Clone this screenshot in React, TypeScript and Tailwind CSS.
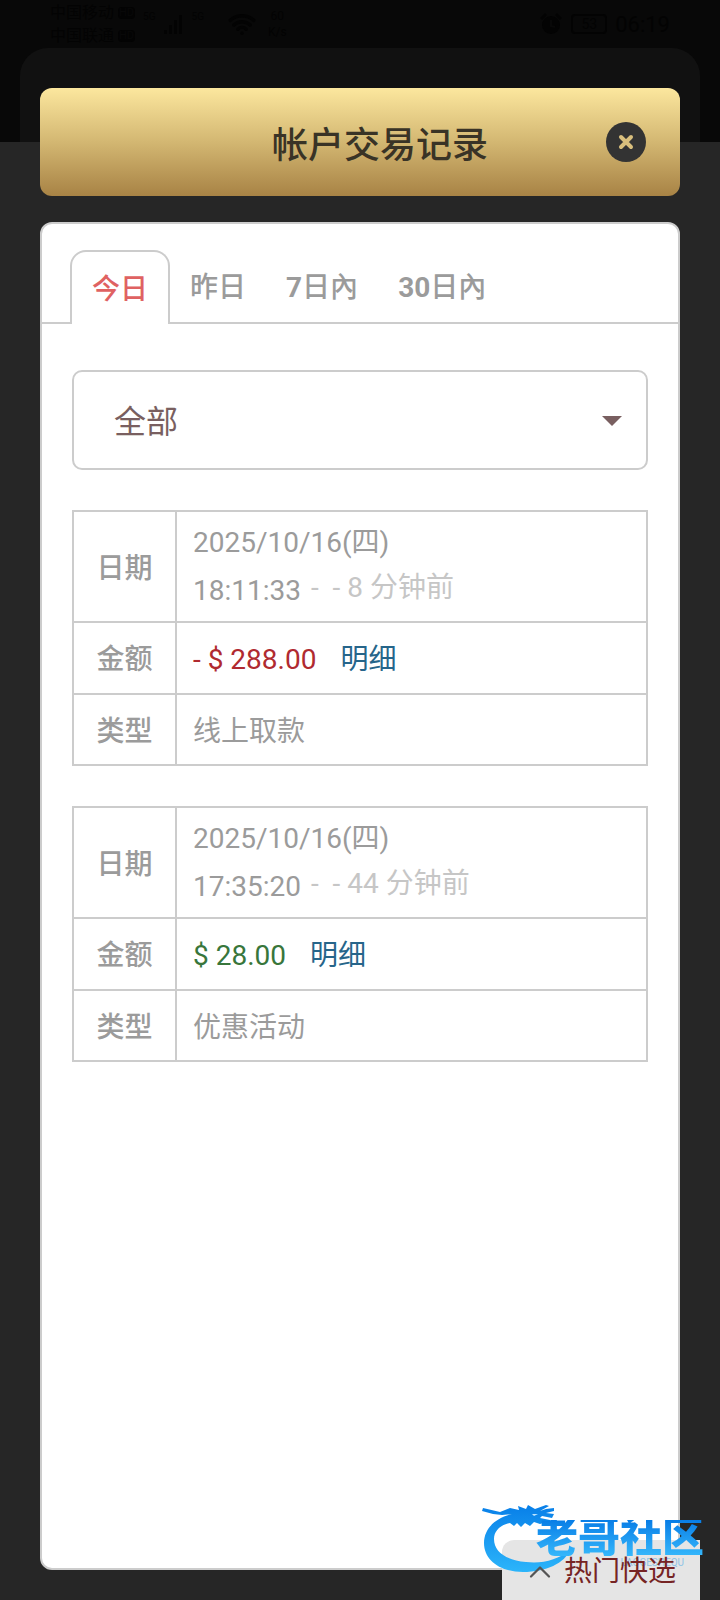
import { ChevronUp, Wifi } from "lucide-react";

type Entry = {
  date: string;
  time: string;
  ago: string;
  amount: string;
  negative: boolean;
  kind: string;
};

const entries: Entry[] = [
  {
    date: "2025/10/16(四)",
    time: "18:11:33",
    ago: "8 分钟前",
    amount: "- $ 288.00",
    negative: true,
    kind: "线上取款",
  },
  {
    date: "2025/10/16(四)",
    time: "17:35:20",
    ago: "44 分钟前",
    amount: "$ 28.00",
    negative: false,
    kind: "优惠活动",
  },
];

const tabs = [
  { count: "", label: "今日" },
  { count: "", label: "昨日" },
  { count: "7", label: "日內" },
  { count: "30", label: "日內" },
];

function StatusBar() {
  return (
    <div className="absolute inset-x-0 top-0 h-[142px] overflow-hidden bg-[#080808] text-[#030303]">
      <div className="flex h-12 items-center justify-between px-[50px]">
        <div className="flex items-center gap-2">
          <div className="text-[16px] leading-[23px]">
            <div className="flex items-center gap-1">
              中国移动 <span className="rounded-sm bg-[#030303] px-px text-[11px] leading-3 text-[#080808]">HD</span>
            </div>
            <div className="flex items-center gap-1">
              中国联通 <span className="rounded-sm bg-[#030303] px-px text-[11px] leading-3 text-[#080808]">HD</span>
            </div>
          </div>
          <span className="self-start pt-2 text-[10px]">5G</span>
          <svg className="h-5 w-5" viewBox="0 0 20 20" fill="currentColor" aria-hidden="true">
            <path d="M0 16h3v4H0zM5 11h3v9H5zM10 6h3v14h-3zM15 1h3v19h-3z" />
          </svg>
          <span className="self-start pt-2 text-[10px]">5G</span>
          <Wifi className="ml-4 h-7 w-7" strokeWidth={3} />
          <div className="ml-1 text-center text-[12px] leading-4">
            <div>60</div>
            <div>K/s</div>
          </div>
        </div>
        <div className="flex items-center gap-2">
          <svg className="h-6 w-6" viewBox="0 0 24 24" fill="currentColor" aria-hidden="true">
            <circle cx="12" cy="13" r="9" />
            <path d="M1 6l5-5 2 2-5 5zM23 6l-5-5-2 2 5 5z" />
            <path d="M12 8v6l4 1" fill="none" stroke="#080808" strokeWidth="2" />
          </svg>
          <span className="rounded-sm border-2 border-[#030303] px-2 text-[14px] leading-4">53</span>
          <span className="text-[22px]">06:19</span>
        </div>
      </div>
      <div className="mx-5 h-28 rounded-t-[28px] bg-[#111111]" />
    </div>
  );
}

function Record({ entry }: { entry: Entry }) {
  const th = "border-2 border-[#cccccc] pt-1 pb-0 font-medium";
  const td = "border-2 border-[#cccccc] px-4 pt-1 pb-0";
  return (
    <table className="w-full table-fixed border-collapse text-[28px] leading-[48px] text-[#9b9b9b]">
      <colgroup>
        <col className="w-[103px]" />
        <col />
      </colgroup>
      <tbody>
        <tr className="h-[111px]">
          <th scope="row" className={th}>日期</th>
          <td className="border-2 border-[#cccccc] px-4 py-0">
            <div>{entry.date}</div>
            <div className="flex gap-[10px]">
              <span>{entry.time}</span>
              <span className="leading-[42px] whitespace-pre text-[#c6c6c6]">{"-  - " + entry.ago}</span>
            </div>
          </td>
        </tr>
        <tr className="h-[72px]">
          <th scope="row" className={th}>金额</th>
          <td className={td}>
            <span className={entry.negative ? "text-[#b02a30]" : "text-[#38763b]"}>{entry.amount}</span>
            <a href="#detail" className="ml-6 text-[#26658a]">明细</a>
          </td>
        </tr>
        <tr className="h-[71px]">
          <th scope="row" className={th}>类型</th>
          <td className={td}>{entry.kind}</td>
        </tr>
      </tbody>
    </table>
  );
}

function Watermark() {
  return (
    <div className="pointer-events-none absolute right-4 bottom-6 h-[76px] w-[224px]">
      <svg className="absolute top-0 left-0 h-[76px] w-[92px]" viewBox="0 0 92 76" aria-hidden="true">
        <defs>
          <linearGradient id="dragon" x1="0" y1="0" x2="0" y2="1">
            <stop offset="0" stopColor="#087fe8" />
            <stop offset="1" stopColor="#2cb5fa" />
          </linearGradient>
        </defs>
        <path
          fill="url(#dragon)"
          d="M32 14C15 18 4 29 4 43C4 60 20 72 43 72C66 72 85 63 90 50C78 60 62 64 46 62C26 60 14 52 14 39C14 31 20 25 30 23L34 26L37 23L41 27L45 23L50 26L54 22L60 24L66 22L73 24L70 20L60 18L62 16L72 18L74 14L66 13L74 11L74 8L66 9L60 11L69 6L66 5L55 9L48 5L46 9L38 6L39 10L30 8L20 12L3 8L2 11L13 14L22 15Z"
        />
        <path d="M52 14L58 14L54 16Z" fill="#bde4ff" />
      </svg>
      <div className="absolute top-[20px] right-0 bg-linear-to-b from-[#087de6] to-[#35b7fb] bg-clip-text text-[42px] leading-9 font-black whitespace-nowrap text-transparent">
        老哥社区
      </div>
      <div className="absolute right-5 bottom-2 text-[10px] leading-[10px] text-[#8fc4e6]">LAOGESHEQU</div>
    </div>
  );
}

export default function App() {
  return (
    <div className="relative flex min-h-screen flex-col bg-[#262626] px-10 pt-[88px] pb-[30px] font-[Roboto,'Noto_Sans_CJK_SC',sans-serif]">
      <StatusBar />
      <header className="relative flex h-[108px] shrink-0 items-center rounded-xl bg-linear-to-b from-[#fce79e] via-[#d3b772] to-[#a88345] pr-[34px] pl-[114px]">
        <h1 className="flex-1 pt-2 text-center text-[36px] leading-[50px] font-medium text-[#393326]">帐户交易记录</h1>
        <button
          type="button"
          aria-label="关闭"
          className="flex h-10 w-10 items-center justify-center rounded-full bg-[#333333]"
        >
          <svg className="h-4 w-4" viewBox="0 0 16 16" aria-hidden="true">
            <path d="M3 3L13 13M13 3L3 13" stroke="#d9bf7d" strokeWidth="4" strokeLinecap="round" />
          </svg>
        </button>
      </header>

      <main className="relative mt-[26px] flex-1 rounded-xl border-2 border-[#cccccc] bg-white">
        <div role="tablist" className="flex border-b-2 border-[#cccccc] pt-[26px] pl-7 text-[28px] leading-[40px] font-medium text-[#9b9b9b]">
          {tabs.map((tab, i) => (
            <button
              key={tab.count + tab.label}
              type="button"
              role="tab"
              aria-selected={i === 0}
              className={
                i === 0
                  ? "-mb-[2px] h-[74px] rounded-t-2xl border-2 border-b-0 border-[#cccccc] bg-white px-5 pt-1 text-[#df6262]"
                  : "h-[72px] px-5 pt-1"
              }
            >
              <span className="font-bold">{tab.count}</span>
              {tab.label}
            </button>
          ))}
        </div>

        <div className="flex flex-col gap-10 px-[30px] pt-[46px] pb-10">
          <div className="relative">
            <select
              aria-label="类型"
              className="block h-[100px] w-full appearance-none rounded-[10px] border-2 border-[#cccccc] bg-white px-10 pt-1 text-[32px] text-[#795f60]"
            >
              <option>全部</option>
            </select>
            <svg
              className="pointer-events-none absolute top-[46px] right-[26px] h-[10px] w-5"
              viewBox="0 0 20 10"
              fill="#795f60"
              aria-hidden="true"
            >
              <path d="M0 0h20L10 10z" />
            </svg>
          </div>
          {entries.map((entry) => (
            <Record key={entry.time} entry={entry} />
          ))}
        </div>
      </main>

      <div className="absolute right-5 bottom-0 h-[60px] w-[198px] rounded-tl-xl bg-[#e5e5e5]" />
      <Watermark />
      <button
        type="button"
        className="absolute right-5 bottom-0 flex h-[60px] w-[198px] items-center gap-3 pt-1 pl-[26px] text-[28px] leading-8 whitespace-nowrap text-[#762424]"
      >
        <ChevronUp className="h-6 w-6 shrink-0 scale-150 text-[#555555]" strokeWidth={1.5} />
        热门快选
      </button>
    </div>
  );
}
